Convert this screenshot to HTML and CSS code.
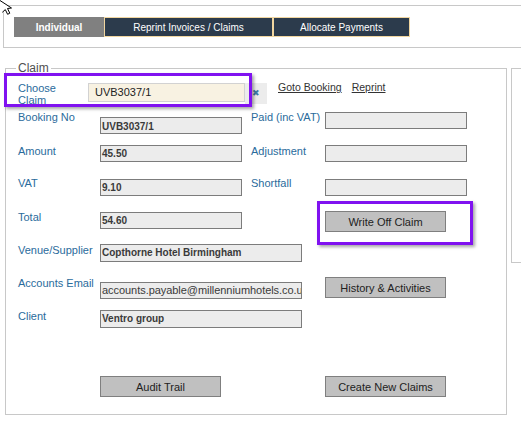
FILE: index.html
```html
<!DOCTYPE html>
<html lang="en">
<head>
<meta charset="utf-8">
<title>Claim</title>
<link rel="stylesheet" href="styles.css">
</head>
<body>
<div class="tabs-panel">
  <div class="tabs">
    <span class="tab active">Individual</span>
    <span class="tab dark reprint">Reprint Invoices / Claims</span>
    <span class="tab dark allocate">Allocate Payments</span>
  </div>
</div>

<div class="main">
  <fieldset class="claim">
    <legend>Claim</legend>
    <div class="choose-row">
      <span class="choose-label">Choose<br>Claim</span>
      <span class="choose-input">UVB3037/1</span>
      <span class="clear">&#x2716;</span>
      <span class="links"><a class="link">Goto Booking</a><a class="link">Reprint</a></span>
    </div>
    <div class="grid">
      <span class="lbl c1">Booking No</span>
      <span class="field c2 f-booking">UVB3037/1</span>
      <span class="lbl c3">Paid (inc VAT)</span>
      <span class="field c4 f-paid"></span>

      <span class="lbl c1">Amount</span>
      <span class="field c2 mt1">45.50</span>
      <span class="lbl c3">Adjustment</span>
      <span class="field c4 mt1"></span>

      <span class="lbl c1">VAT</span>
      <span class="field c2 mt3">9.10</span>
      <span class="lbl c3">Shortfall</span>
      <span class="field c4 mt3"></span>

      <span class="lbl c1">Total</span>
      <span class="field c2 mt2">54.60</span>
      <span class="btn c4 mt1">Write Off Claim</span>

      <span class="lbl c1">Venue/Supplier</span>
      <span class="field wide tall mt1">Copthorne Hotel Birmingham</span>

      <span class="lbl c1">Accounts Email</span>
      <span class="field wide email">accounts.payable@millenniumhotels.co.uk</span>
      <span class="btn c4 mt1">History &amp; Activities</span>

      <span class="lbl c1">Client</span>
      <span class="field wide tall mt1">Ventro group</span>

      <span class="btn c2 r8">Audit Trail</span>
      <span class="btn c4 r8">Create New Claims</span>
    </div>
  </fieldset>
  <div class="side-box"></div>
</div>

<div class="hl hl-choose"></div>
<div class="hl hl-write"></div>

<svg class="cursor" width="14" height="16" viewBox="0 0 14 16">
  <path d="M0 0.5 L11.5 8 L7.5 8.5 L9.8 13.2 L7.6 14.3 L5.3 9.6 L2.3 12.3" fill="#fff" stroke="#000" stroke-width="1" stroke-linejoin="miter"/>
</svg>
</body>
</html>
```

FILE: styles.css
```css
html, body {
  margin: 0;
  padding: 0;
}

body {
  font-family: "Liberation Sans", Arial, sans-serif;
  background: #ffffff;
  color: #222;
  width: 521px;
  height: 435px;
  overflow: hidden;
  position: relative;
}

/* ---------- tab strip ---------- */
.tabs-panel {
  margin: 5px 0 0 3px;
  border: 1px solid #c8c8c8;
  border-right: none;
  padding: 11px 0 10px 10px;
  height: 20px;
}

.tabs {
  display: flex;
  height: 20px;
}

.tab {
  box-sizing: border-box;
  height: 20px;
  display: flex;
  align-items: center;
  justify-content: center;
  font-size: 10px;
  color: #ffffff;
  white-space: nowrap;
}

.tab.active {
  width: 90px;
  background: #808080;
  font-weight: bold;
}

.tab.dark {
  background: #2c3b4c;
  border: 1px solid #f1d6a0;
}

.tab.reprint { width: 169px; }
.tab.allocate { width: 137px; }

/* ---------- main area ---------- */
.main {
  display: flex;
  align-items: flex-start;
  margin-top: 13px;
}

.claim {
  flex: 0 0 auto;
  box-sizing: border-box;
  width: 502px;
  margin: 0 0 0 5px;
  padding: 6px 0 17px 12px;
  border: 1px solid #c8c8c8;
  min-width: 0;
}

.claim legend {
  font-size: 12px;
  line-height: 14px;
  color: #505050;
  padding: 0 2px;
  margin-left: -2px;
}

.side-box {
  flex: 0 0 auto;
  width: 20px;
  height: 193px;
  margin: 7px 0 0 4px;
  border: 1px solid #c8c8c8;
  border-right: none;
}

/* ---------- choose claim row ---------- */
.choose-row {
  display: flex;
  align-items: flex-start;
  height: 29px;
}

.choose-label {
  width: 70px;
  margin-top: 1px;
  font-size: 11px;
  line-height: 12px;
  color: #2a6b9c;
}

.choose-input {
  box-sizing: border-box;
  width: 157px;
  height: 19px;
  margin-top: 2px;
  padding-left: 6px;
  border: 1px solid #d2d2d2;
  background: #f8f2e2;
  font-size: 11px;
  line-height: 17px;
  color: #222;
}

.clear {
  box-sizing: border-box;
  width: 22px;
  height: 21px;
  margin-top: 2px;
  padding-left: 7px;
  background: #ececec;
  color: #3d7ba3;
  font-size: 9px;
  line-height: 21px;
}

.links {
  display: flex;
  gap: 10px;
  margin-left: 11px;
  margin-top: 0;
}

.link {
  font-size: 10.5px;
  line-height: 13px;
  color: #333;
  text-decoration: underline;
  cursor: pointer;
}

/* ---------- form grid ---------- */
.grid {
  display: grid;
  grid-template-columns: 82px 151px 74px 142px;
  grid-template-rows: 34px 32px 34px 33px 33px 33px 67px 21px;
  align-items: start;
}

.lbl {
  font-size: 11px;
  line-height: 14px;
  color: #2a6b9c;
  white-space: nowrap;
}

.field {
  box-sizing: border-box;
  width: 142px;
  height: 17px;
  padding: 1px 0 0 1px;
  border: 1px solid #7c7c7c;
  background: #ececec;
  font-size: 10px;
  font-weight: bold;
  line-height: 13px;
  color: #3a3a3a;
  white-space: nowrap;
  overflow: hidden;
}

.field.wide {
  width: 202px;
  grid-column: 2 / span 2;
}

.field.tall { height: 18px; }

.field.email {
  margin-top: 6px;
  font-size: 11px;
  font-weight: normal;
  padding-top: 1px;
  letter-spacing: -0.05px;
}

.f-booking {
  margin-top: 7px;
  padding-top: 2px;
}

.f-paid { margin-top: 2px; }

.mt1 { margin-top: 1px; }
.mt2 { margin-top: 2px; }
.mt3 { margin-top: 3px; }

.btn {
  box-sizing: border-box;
  width: 121px;
  height: 21px;
  display: flex;
  align-items: center;
  justify-content: center;
  background: #c0c0c0;
  border: 1px solid #7f7f7f;
  font-size: 11px;
  color: #222;
  white-space: nowrap;
}

.c1 { grid-column: 1; }
.c2 { grid-column: 2; }
.c3 { grid-column: 3; }
.c4 { grid-column: 4; }
.r8 { grid-row: 8; }

/* ---------- annotation highlights ---------- */
.hl {
  position: absolute;
  box-sizing: border-box;
  border: 3px solid #8012f0;
  box-shadow: 2px 2px 3px rgba(0, 0, 0, 0.35);
  pointer-events: none;
}

.hl-choose {
  left: 4px;
  top: 73px;
  width: 248px;
  height: 34px;
}

.hl-write {
  left: 317px;
  top: 201px;
  width: 156px;
  height: 44px;
}

.cursor {
  position: absolute;
  left: 0;
  top: 0;
}
```
